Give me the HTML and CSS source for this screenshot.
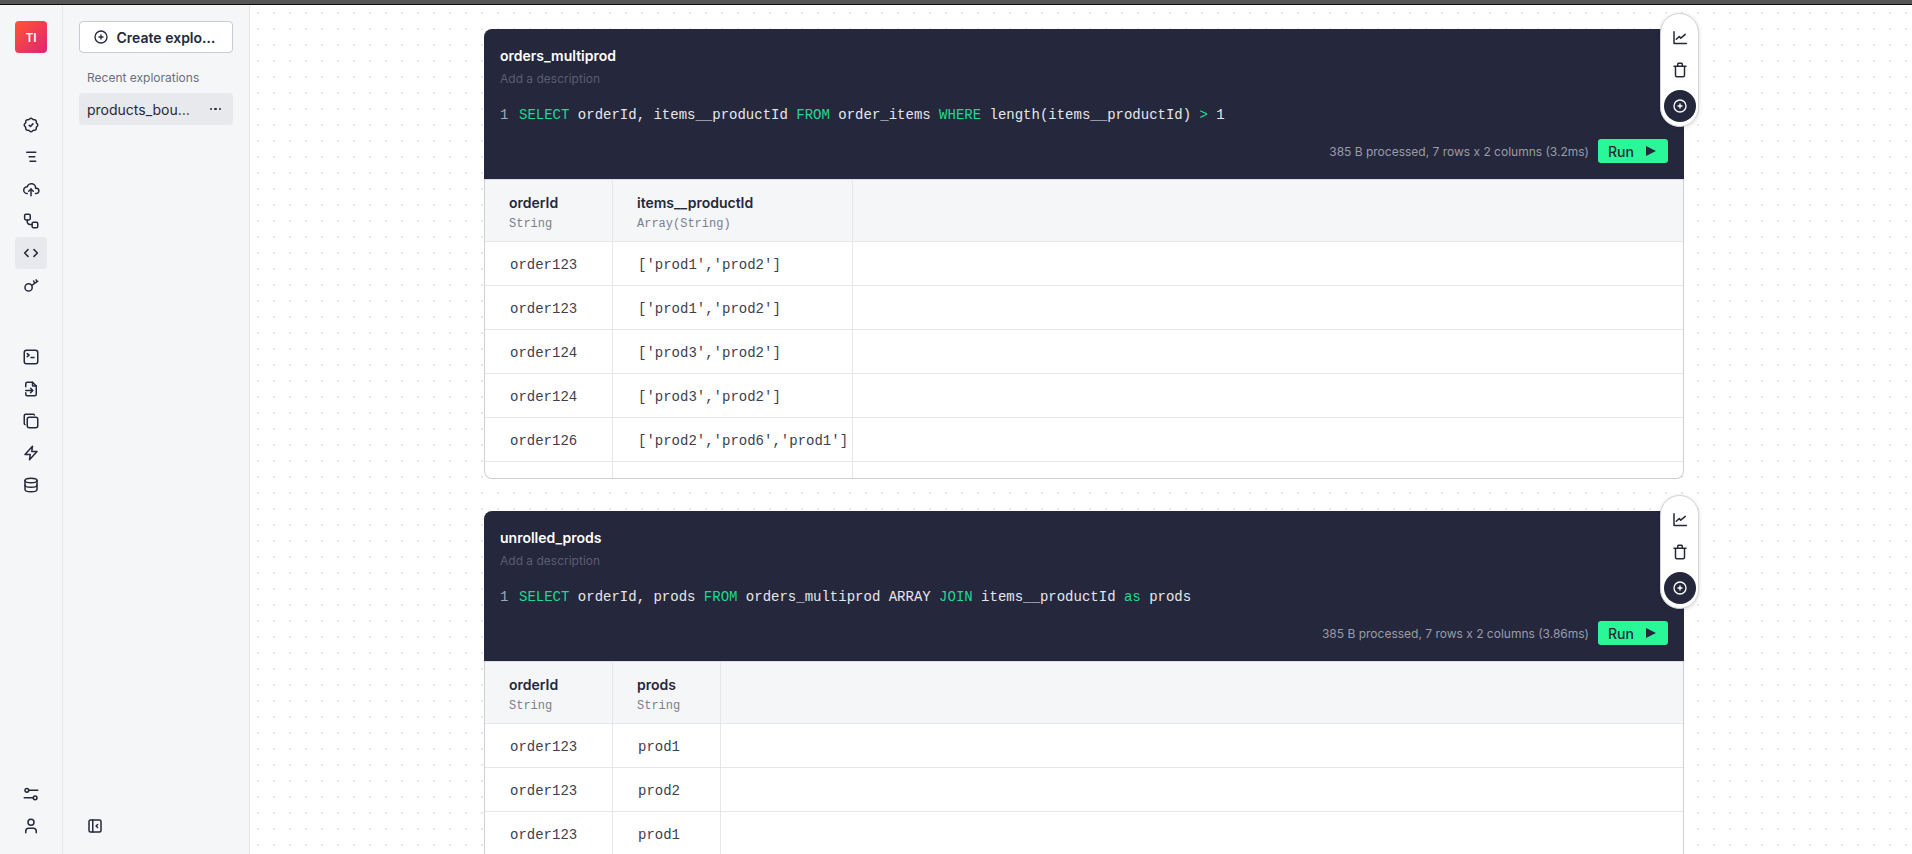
FILE: index.html
```html
<!DOCTYPE html>
<html lang="en">
<head>
<meta charset="utf-8">
<title>Explorations</title>
<link rel="stylesheet" href="styles.css">
</head>
<body>
<svg class="defs" aria-hidden="true">
  <symbol id="i-rosette" viewBox="0 0 24 24"><path d="M5 7.2a2.2 2.2 0 0 1 2.2 -2.2h1a2.2 2.2 0 0 0 1.55 -.64l.7 -.7a2.2 2.2 0 0 1 3.12 0l.7 .7c.412 .41 .97 .64 1.55 .64h1a2.2 2.2 0 0 1 2.2 2.2v1c0 .58 .23 1.138 .64 1.55l.7 .7a2.2 2.2 0 0 1 0 3.12l-.7 .7a2.2 2.2 0 0 0 -.64 1.55v1a2.2 2.2 0 0 1 -2.2 2.2h-1a2.2 2.2 0 0 0 -1.55 .64l-.7 .7a2.2 2.2 0 0 1 -3.12 0l-.7 -.7a2.2 2.2 0 0 0 -1.55 -.64h-1a2.2 2.2 0 0 1 -2.2 -2.2v-1a2.2 2.2 0 0 0 -.64 -1.55l-.7 -.7a2.2 2.2 0 0 1 0 -3.12l.7 -.7a2.2 2.2 0 0 0 .64 -1.55v-1"/><path d="M9.500 12.500l1.800 1.500l3.200 -3.500"/></symbol>
  <symbol id="i-lines" viewBox="0 0 24 24"><path d="M6.300 5.700h12M9.500 11.800h7.500M10.700 17.800h7.600"/></symbol>
  <symbol id="i-cloud" viewBox="0 0 24 24"><path d="M7 18a4.600 4.400 0 0 1 0 -9a5 4.500 0 0 1 11 2h1a3.500 3.500 0 0 1 0 7h-1"/><path d="M9 15l3 -3l3 3"/><path d="M12 12v9"/></symbol>
  <symbol id="i-flow" viewBox="0 0 24 24"><rect x="3.500" y="3" width="7.500" height="7.500" rx="1.800"/><rect x="13.500" y="13.500" width="7.500" height="7.500" rx="1.800"/><path d="M7 10.500v2.500a3.500 3.500 0 0 0 3.500 3.500h3"/></symbol>
  <symbol id="i-code" viewBox="0 0 24 24"><path d="M8 7.500l-4.500 4.500l4.500 4.500M16 7.500l4.500 4.500l-4.500 4.500"/></symbol>
  <symbol id="i-key" viewBox="0 0 24 24"><circle cx="8.800" cy="15.200" r="4.800"/><path d="M13 12.500l8 -5.500M17 9.700l-1.500 -3M20 7.700l-1.200 -2.500"/></symbol>
  <symbol id="i-terminal" viewBox="0 0 24 24"><rect x="3" y="3" width="18" height="18" rx="3"/><path d="M7 7.500l2.500 2l-2.500 2M12 12.500h4"/></symbol>
  <symbol id="i-file" viewBox="0 0 24 24"><path d="M14 3v4a1 1 0 0 0 1 1h4"/><path d="M5 9v-4a2 2 0 0 1 2 -2h7l5 5v11a2 2 0 0 1 -2 2h-10a2 2 0 0 1 -2 -2v-2"/><path d="M5 14h9M11.500 11l3 3l-3 3"/></symbol>
  <symbol id="i-copy" viewBox="0 0 24 24"><path d="M7 9.667a2.667 2.667 0 0 1 2.667 -2.667h8.666a2.667 2.667 0 0 1 2.667 2.667v8.666a2.667 2.667 0 0 1 -2.667 2.667h-8.666a2.667 2.667 0 0 1 -2.667 -2.667z"/><path d="M4.012 16.737a2.005 2.005 0 0 1 -1.012 -1.737v-10c0 -1.100 .9 -2 2 -2h10c.75 0 1.158 .385 1.500 1"/></symbol>
  <symbol id="i-bolt" viewBox="0 0 24 24"><path d="M14 3l-1 7h7l-10 11l1 -7h-7z"/></symbol>
  <symbol id="i-db" viewBox="0 0 24 24"><path d="M4 6a8 3 0 1 0 16 0a8 3 0 1 0 -16 0"/><path d="M4 6v6a8 3 0 0 0 16 0v-6"/><path d="M4 12v6a8 3 0 0 0 16 0v-6"/></symbol>
  <symbol id="i-sliders" viewBox="0 0 24 24"><circle cx="6.500" cy="7" r="2.500"/><path d="M9 7h12M3 17h12"/><circle cx="17.500" cy="17" r="2.500"/></symbol>
  <symbol id="i-user" viewBox="0 0 24 24"><path d="M8 7a4 4 0 1 0 8 0a4 4 0 0 0 -8 0"/><path d="M5 21v-2a4 4 0 0 1 4 -4h6a4 4 0 0 1 4 4v2"/></symbol>
  <symbol id="i-collapse" viewBox="0 0 24 24"><path d="M4 6a2 2 0 0 1 2 -2h12a2 2 0 0 1 2 2v12a2 2 0 0 1 -2 2h-12a2 2 0 0 1 -2 -2z"/><path d="M9 4v16M15.500 10l-2 2l2 2"/></symbol>
  <symbol id="i-chart" viewBox="0 0 24 24"><path d="M4 5v15.500h16.500"/><path d="M7 15l4 -3.500l2 2l6 -5"/></symbol>
  <symbol id="i-trash" viewBox="0 0 24 24"><path d="M4 7h16M6 7v12a2 2 0 0 0 2 2h8a2 2 0 0 0 2 -2v-12M9 7v-3a1 1 0 0 1 1 -1h4a1 1 0 0 1 1 1v3"/></symbol>
  <symbol id="i-plus" viewBox="0 0 24 24"><path d="M3 12a9 9 0 1 0 18 0a9 9 0 0 0 -18 0"/><path d="M9 12h6M12 9v6"/></symbol>
</svg>

<div class="topbar"></div>
<div class="app">
  <nav class="rail">
    <div class="logo">TI</div>
    <div class="rail-group first">
      <a class="rail-item"><svg class="ico"><use href="#i-rosette"/></svg></a>
      <a class="rail-item"><svg class="ico"><use href="#i-lines"/></svg></a>
      <a class="rail-item"><svg class="ico"><use href="#i-cloud"/></svg></a>
      <a class="rail-item"><svg class="ico"><use href="#i-flow"/></svg></a>
      <a class="rail-item active"><svg class="ico"><use href="#i-code"/></svg></a>
      <a class="rail-item"><svg class="ico"><use href="#i-key"/></svg></a>
    </div>
    <div class="rail-group second">
      <a class="rail-item"><svg class="ico"><use href="#i-terminal"/></svg></a>
      <a class="rail-item"><svg class="ico"><use href="#i-file"/></svg></a>
      <a class="rail-item"><svg class="ico"><use href="#i-copy"/></svg></a>
      <a class="rail-item"><svg class="ico"><use href="#i-bolt"/></svg></a>
      <a class="rail-item"><svg class="ico"><use href="#i-db"/></svg></a>
    </div>
    <div class="rail-group bottom">
      <a class="rail-item"><svg class="ico"><use href="#i-sliders"/></svg></a>
      <a class="rail-item"><svg class="ico"><use href="#i-user"/></svg></a>
    </div>
  </nav>

  <aside class="panel">
    <button class="create"><svg class="ico ico-16"><use href="#i-plus"/></svg><span>Create explo…</span></button>
    <div class="recent-label">Recent explorations</div>
    <div class="recent-item"><span>products_bou…</span><span class="more"><i></i><i></i><i></i></span></div>
    <button class="collapse"><svg class="ico"><use href="#i-collapse"/></svg></button>
  </aside>

  <main class="canvas">
    <section class="card">
      <div class="fab">
        <button class="fab-btn"><svg class="ico"><use href="#i-chart"/></svg></button>
        <button class="fab-btn"><svg class="ico"><use href="#i-trash"/></svg></button>
        <button class="fab-btn add"><svg class="ico ico-16"><use href="#i-plus"/></svg></button>
      </div>
      <header class="head">
        <div class="title">orders_multiprod</div>
        <div class="desc">Add a description</div>
        <div class="code"><span class="ln">1</span><span><b>SELECT</b> orderId, items__productId <b>FROM</b> order_items <b>WHERE</b> length(items__productId) <b>&gt;</b> 1</span></div>
        <div class="foot"><span class="status">385 B processed, 7 rows x 2 columns (3.2ms)</span><button class="run">Run<svg class="play" viewBox="0 0 10 10"><path d="M0 0l10 5l-10 5z"/></svg></button></div>
      </header>
      <div class="results">
        <table>
          <colgroup><col class="col-id"><col class="col-wide"><col></colgroup>
          <thead><tr><th><div class="name">orderId</div><div class="type">String</div></th><th><div class="name">items__productId</div><div class="type">Array(String)</div></th><th></th></tr></thead>
          <tbody>
            <tr><td>order123</td><td>['prod1','prod2']</td><td></td></tr>
            <tr><td>order123</td><td>['prod1','prod2']</td><td></td></tr>
            <tr><td>order124</td><td>['prod3','prod2']</td><td></td></tr>
            <tr><td>order124</td><td>['prod3','prod2']</td><td></td></tr>
            <tr><td>order126</td><td>['prod2','prod6','prod1']</td><td></td></tr>
            <tr><td></td><td></td><td></td></tr>
          </tbody>
        </table>
      </div>
    </section>

    <section class="card">
      <div class="fab">
        <button class="fab-btn"><svg class="ico"><use href="#i-chart"/></svg></button>
        <button class="fab-btn"><svg class="ico"><use href="#i-trash"/></svg></button>
        <button class="fab-btn add"><svg class="ico ico-16"><use href="#i-plus"/></svg></button>
      </div>
      <header class="head">
        <div class="title">unrolled_prods</div>
        <div class="desc">Add a description</div>
        <div class="code"><span class="ln">1</span><span><b>SELECT</b> orderId, prods <b>FROM</b> orders_multiprod ARRAY <b>JOIN</b> items__productId <b>as</b> prods</span></div>
        <div class="foot"><span class="status">385 B processed, 7 rows x 2 columns (3.86ms)</span><button class="run">Run<svg class="play" viewBox="0 0 10 10"><path d="M0 0l10 5l-10 5z"/></svg></button></div>
      </header>
      <div class="results">
        <table>
          <colgroup><col class="col-id"><col class="col-narrow"><col></colgroup>
          <thead><tr><th><div class="name">orderId</div><div class="type">String</div></th><th><div class="name">prods</div><div class="type">String</div></th><th></th></tr></thead>
          <tbody>
            <tr><td>order123</td><td>prod1</td><td></td></tr>
            <tr><td>order123</td><td>prod2</td><td></td></tr>
            <tr><td>order123</td><td>prod1</td><td></td></tr>
          </tbody>
        </table>
      </div>
    </section>
  </main>
</div>
</body>
</html>
```

FILE: styles.css
```css
* { box-sizing: border-box; }

html, body {
  margin: 0;
  height: 100%;
  overflow: hidden;
}

body {
  display: flex;
  flex-direction: column;
  font-family: Inter, "Liberation Sans", sans-serif;
  color: #26283c;
  background: #fff;
}

.defs { display: none; }

.topbar {
  flex: none;
  height: 5px;
  background: #565656;
  border-bottom: 1px solid #0c0c0c;
}

.app {
  flex: 1;
  display: flex;
  min-height: 0;
}

button {
  font: inherit;
  color: inherit;
  padding: 0;
  border: 0;
  background: none;
}

.ico {
  display: block;
  width: 18px;
  height: 18px;
  fill: none;
  stroke: currentColor;
  stroke-width: 2;
  stroke-linecap: round;
  stroke-linejoin: round;
}

.ico-16 { width: 16px; height: 16px; }

/* icon rail */
.rail {
  flex: none;
  width: 63px;
  display: flex;
  flex-direction: column;
  align-items: center;
  padding-top: 16px;
  background: #f5f6f8;
  border-right: 1px solid #e4e6ea;
}

.logo {
  width: 32px;
  height: 32px;
  display: flex;
  align-items: center;
  justify-content: center;
  border-radius: 4px;
  background: linear-gradient(135deg, #ff5630 0%, #dd2476 100%);
  color: #fff;
  font-size: 12px;
  font-weight: 600;
}

.rail-group {
  display: flex;
  flex-direction: column;
}

.rail-group.first { margin-top: 56px; }
.rail-group.second { margin-top: 40px; }
.rail-group.bottom { margin-top: auto; margin-bottom: 12px; }

.rail-item {
  width: 32px;
  height: 32px;
  display: flex;
  align-items: center;
  justify-content: center;
  border-radius: 4px;
  color: #26283c;
}

.rail-item.active { background: #e8e9ec; }

/* explorations panel */
.panel {
  flex: none;
  width: 187px;
  display: flex;
  flex-direction: column;
  padding: 16px 16px 12px;
  background: #f5f6f8;
  border-right: 1px solid #e4e6ea;
}

.create {
  height: 32px;
  display: flex;
  align-items: center;
  justify-content: center;
  gap: 8px;
  padding-right: 4px;
  background: #fff;
  border: 1px solid #c9cbd3;
  border-radius: 4px;
  font-size: 14px;
  font-weight: 600;
}

.recent-label {
  margin-top: 17px;
  padding-left: 8px;
  font-size: 12px;
  line-height: 16px;
  color: #6b6e80;
}

.recent-item {
  margin-top: 7px;
  height: 32px;
  display: flex;
  align-items: center;
  justify-content: space-between;
  padding: 0 12px 0 8px;
  background: #e8e9ec;
  border-radius: 4px;
  font-size: 14px;
}

.more {
  display: flex;
  gap: 2px;
}

.more i {
  width: 2.5px;
  height: 2.5px;
  border-radius: 50%;
  background: #26283c;
}

.collapse {
  margin-top: auto;
  align-self: flex-start;
  width: 32px;
  height: 32px;
  display: flex;
  align-items: center;
  justify-content: center;
}

/* canvas */
.canvas {
  flex: 1;
  min-width: 0;
  overflow: hidden;
  display: flex;
  flex-direction: column;
  gap: 32px;
  padding: 24px 0 0 234px;
  background-color: #fff;
  background-image: radial-gradient(circle at 1px 1px, #e7e8ec 1px, transparent 1.2px);
  background-size: 16px 16px;
  background-position: 7px 7px;
}

.card {
  flex: none;
  position: relative;
  width: 1200px;
  height: 450px;
}

.head {
  height: 150px;
  padding: 17px 16px 16px;
  display: flex;
  flex-direction: column;
  background: #25273c;
  border-radius: 8px 8px 0 0;
}

.title {
  font-size: 14px;
  line-height: 20px;
  font-weight: 600;
  color: #fff;
}

.desc {
  margin-top: 5px;
  font-size: 12px;
  line-height: 16px;
  color: #5b5d70;
}

.code {
  margin-top: 18px;
  display: flex;
  font-family: "Liberation Mono", monospace;
  font-size: 14px;
  line-height: 20px;
  color: #e6e7ec;
  white-space: pre;
}

.code b {
  font-weight: 400;
  color: #1fd98c;
}

.ln {
  width: 19px;
  color: #a5a7b3;
}

.foot {
  margin-top: 14px;
  display: flex;
  align-items: center;
  justify-content: flex-end;
  gap: 9px;
}

.status {
  font-size: 12px;
  color: #9b9ca9;
}

.run {
  width: 70px;
  height: 24px;
  display: flex;
  align-items: center;
  gap: 12px;
  padding-left: 10px;
  background: #2af898;
  border-radius: 3px;
  font-size: 14px;
  font-weight: 500;
  color: #25273c;
}

.play {
  width: 10px;
  height: 10px;
  fill: #25273c;
}

/* results table */
.results {
  height: 300px;
  overflow: hidden;
  background: #fff;
  border: 1px solid #cdcfd5;
  border-top-color: #dcdee3;
  border-radius: 0 0 8px 8px;
}

table {
  width: 100%;
  table-layout: fixed;
  border-collapse: separate;
  border-spacing: 0;
}

.col-id { width: 128px; }
.col-wide { width: 240px; }
.col-narrow { width: 108px; }

th, td {
  padding: 0 0 0 24px;
  text-align: left;
  border-right: 1px solid #e6e7eb;
  border-bottom: 1px solid #e6e7eb;
}

th:last-child, td:last-child { border-right: 0; }

th {
  height: 62px;
  padding-top: 3px;
  background: #f5f6f8;
  font-weight: 400;
}

td {
  height: 44px;
  padding: 2px 0 0 25px;
  font-family: "Liberation Mono", monospace;
  font-size: 14px;
  color: #3d3f50;
  white-space: nowrap;
}

.name {
  font-size: 14px;
  line-height: 20px;
  font-weight: 600;
  color: #26283c;
}

.type {
  font-family: "Liberation Mono", monospace;
  font-size: 12px;
  line-height: 16px;
  margin-top: 3px;
  color: #7c7e8d;
}

/* floating actions */
.fab {
  position: absolute;
  top: -16px;
  right: -15px;
  z-index: 2;
  width: 39px;
  height: 114px;
  display: flex;
  flex-direction: column;
  align-items: center;
  padding-top: 7px;
  background: #fff;
  border: 1px solid #d2d3d9;
  border-radius: 20px;
  box-shadow: 0 1px 4px rgba(0, 0, 0, .14);
}

.fab-btn {
  flex: none;
  width: 32px;
  height: 32px;
  display: flex;
  align-items: center;
  justify-content: center;
}

.fab-btn + .fab-btn { margin-top: 1px; }

.fab-btn.add {
  margin-top: 4px;
  background: #25273c;
  border-radius: 50%;
  color: #fff;
}
```
